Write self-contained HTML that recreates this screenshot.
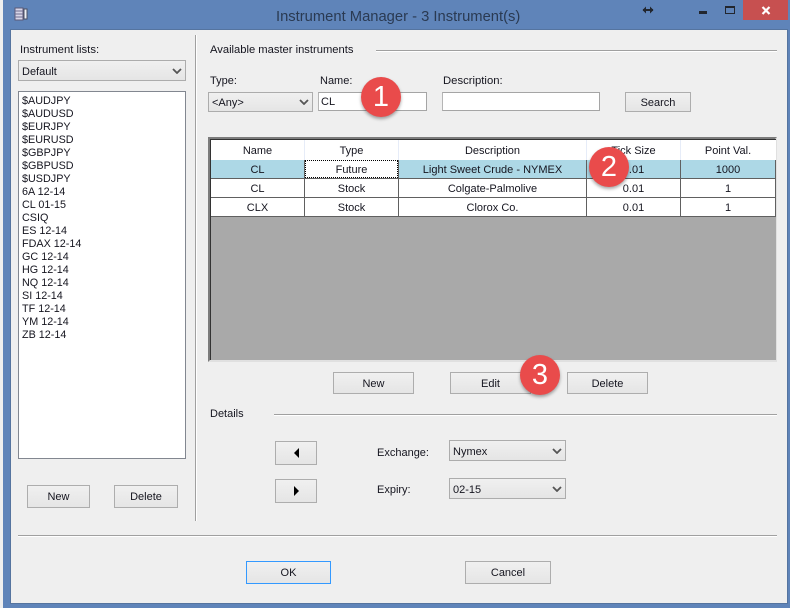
<!DOCTYPE html>
<html><head><meta charset="utf-8"><style>
html,body{margin:0;padding:0}
body{width:790px;height:608px;position:relative;overflow:hidden;background:#5f84b9;font-family:"Liberation Sans",sans-serif;font-size:11px;color:#15151f}
div{position:absolute;box-sizing:border-box}
.t{white-space:nowrap;line-height:14px;height:14px;margin-top:1px}
.btn{border:1px solid #adadad;background:linear-gradient(#f0f0f0,#e5e5e5);text-align:center;padding-top:1px}
.sel{border:1px solid #acacac;background:linear-gradient(#f0f0f0,#e5e5e5);padding-left:3px;padding-top:1px;white-space:nowrap}
.sel svg{position:absolute;right:3px;top:50%;margin-top:-3px}
.inp{border:1px solid #a5a5a5;border-left-color:#b5b5b5;background:#fff;padding-left:2px;padding-top:1px}
.hl{height:2px;background:linear-gradient(#a0a0a0 50%,#fff 50%)}
.vl{width:2px;background:linear-gradient(90deg,#a0a0a0 50%,#fff 50%)}
.c{text-align:center;line-height:18px;height:18px;white-space:nowrap;margin-top:1px}
.g{background:#606060}
.badge{width:40px;height:40px;border-radius:50%;background:#e94b4b;box-shadow:0 2px 3px rgba(0,0,0,.35);color:#fff;font-size:29px;line-height:40px;text-align:center}
</style></head><body>
<div style="left:0;top:0;width:3px;height:608px;background:#efefef"></div>
<div style="left:3px;top:0;width:787px;height:608px;background:#5f84b9"></div>
<div style="left:11px;top:30px;width:776px;height:573px;background:#efefef;box-shadow:0 0 0 1px #55749f"></div>

<svg style="position:absolute;left:14px;top:7px" width="14" height="14" viewBox="0 0 14 14"><rect x="1" y="1" width="8" height="12" fill="#d9d6e8" stroke="#5b5a78"/><path d="M1 4h8M1 7h8M1 10h8" stroke="#6f6d90"/><rect x="10" y="2" width="3" height="10" fill="#eef0f5" stroke="#4b4f63"/></svg>
<div class="t" style="left:276px;top:7px;font-size:14.75px;line-height:18px;height:18px;color:#2a3a52">Instrument Manager - 3 Instrument(s)</div>

<svg style="position:absolute;left:642px;top:5px" width="12" height="10" viewBox="0 0 12 10"><path d="M1 5h10" stroke="#22262e" stroke-width="2"/><path d="M0.500 5L4 1.500V8.500ZM11.500 5L8 1.500V8.500Z" fill="#22262e"/></svg>
<div style="left:699px;top:11px;width:8px;height:3px;background:#22262e"></div>
<div style="left:725px;top:6px;width:10px;height:8px;border:1px solid #22262e;border-top-width:2px"></div>
<div style="left:743px;top:0;width:45px;height:20px;background:#c75050"></div>
<svg style="position:absolute;left:761px;top:6px" width="10" height="9" viewBox="0 0 10 9"><path d="M1.500 1L8.500 8M8.500 1L1.500 8" stroke="#fff" stroke-width="2.200"/></svg>

<div class="t" style="left:20px;top:42px;font-size:11.3px">Instrument lists:</div>
<div class="sel" style="left:18px;top:60px;width:168px;height:21px;line-height:21px">Default<svg width="10" height="6" viewBox="0 0 10 6"><path d="M1 1l4 4 4-4" fill="none" stroke="#555" stroke-width="1.800"/></svg></div>
<div style="left:18px;top:91px;width:168px;height:368px;background:#fff;border:1px solid #828790"></div>
<div style="left:22px;top:95px;font-size:10.8px;line-height:13px;white-space:nowrap;color:#15151f">$AUDJPY<br>$AUDUSD<br>$EURJPY<br>$EURUSD<br>$GBPJPY<br>$GBPUSD<br>$USDJPY<br>6A 12-14<br>CL 01-15<br>CSIQ<br>ES 12-14<br>FDAX 12-14<br>GC 12-14<br>HG 12-14<br>NQ 12-14<br>SI 12-14<br>TF 12-14<br>YM 12-14<br>ZB 12-14</div>
<div class="btn" style="left:27px;top:485px;width:63px;height:23px;line-height:21px">New</div>
<div class="btn" style="left:114px;top:485px;width:64px;height:23px;line-height:21px">Delete</div>
<div class="vl" style="left:195px;top:35px;height:486px"></div>

<div class="t" style="left:210px;top:42px;font-size:11.2px">Available master instruments</div>
<div class="hl" style="left:376px;top:50px;width:401px"></div>
<div class="t" style="left:210px;top:73px">Type:</div>
<div class="t" style="left:320px;top:73px">Name:</div>
<div class="t" style="left:443px;top:73px;font-size:11.3px">Description:</div>
<div class="sel" style="left:208px;top:92px;width:105px;height:20px;line-height:18px;padding-left:3px">&lt;Any&gt;<svg width="10" height="6" viewBox="0 0 10 6"><path d="M1 1l4 4 4-4" fill="none" stroke="#555" stroke-width="1.800"/></svg></div>
<div class="inp" style="left:318px;top:92px;width:109px;height:19px;line-height:17px">CL</div>
<div class="inp" style="left:442px;top:92px;width:158px;height:19px"></div>
<div class="btn" style="left:625px;top:92px;width:66px;height:20px;line-height:18px">Search</div>

<div style="left:208px;top:137px;width:569px;height:225px;background:#a9a9a9;border:2px solid #7c7c7c;border-right-color:#e0e0e0;border-bottom-color:#e0e0e0"></div>
<div style="left:210px;top:139px;width:566px;height:221px;background:#a9a9a9;border-top:1px solid #333;border-left:1px solid #333"></div>
<div style="left:211px;top:140px;width:565px;height:20px;background:#fff"></div>
<div style="left:304px;top:140px;width:1px;height:20px;background:#e6ecf8"></div>
<div style="left:398px;top:140px;width:1px;height:20px;background:#e6ecf8"></div>
<div style="left:586px;top:140px;width:1px;height:20px;background:#e6ecf8"></div>
<div style="left:680px;top:140px;width:1px;height:20px;background:#e6ecf8"></div>
<div class="c" style="left:211px;top:141px;width:93px">Name</div>
<div class="c" style="left:305px;top:141px;width:93px">Type</div>
<div class="c" style="left:399px;top:141px;width:187px">Description</div>
<div class="c" style="left:587px;top:141px;width:93px">Tick Size</div>
<div class="c" style="left:681px;top:141px;width:94px">Point Val.</div>

<div style="left:211px;top:160px;width:564px;height:18px;background:#add8e6"></div>
<div style="left:211px;top:179px;width:564px;height:37px;background:#fff"></div>
<div class="g" style="left:211px;top:178px;width:565px;height:1px"></div>
<div class="g" style="left:211px;top:197px;width:565px;height:1px"></div>
<div class="g" style="left:211px;top:216px;width:565px;height:1px"></div>
<div class="g" style="left:304px;top:160px;width:1px;height:57px"></div>
<div class="g" style="left:398px;top:160px;width:1px;height:57px"></div>
<div class="g" style="left:586px;top:160px;width:1px;height:57px"></div>
<div class="g" style="left:680px;top:160px;width:1px;height:57px"></div>
<div class="g" style="left:775px;top:160px;width:1px;height:57px"></div>
<div style="left:305px;top:160px;width:93px;height:18px;background:#fff;border:1px dotted #000"></div>

<div class="c" style="left:211px;top:160px;width:93px">CL</div>
<div class="c" style="left:305px;top:160px;width:93px">Future</div>
<div class="c" style="left:399px;top:160px;width:187px">Light Sweet Crude - NYMEX</div>
<div class="c" style="left:587px;top:160px;width:93px">0.01</div>
<div class="c" style="left:681px;top:160px;width:94px">1000</div>
<div class="c" style="left:211px;top:179px;width:93px">CL</div>
<div class="c" style="left:305px;top:179px;width:93px">Stock</div>
<div class="c" style="left:399px;top:179px;width:187px">Colgate-Palmolive</div>
<div class="c" style="left:587px;top:179px;width:93px">0.01</div>
<div class="c" style="left:681px;top:179px;width:94px">1</div>
<div class="c" style="left:211px;top:198px;width:93px">CLX</div>
<div class="c" style="left:305px;top:198px;width:93px">Stock</div>
<div class="c" style="left:399px;top:198px;width:187px">Clorox Co.</div>
<div class="c" style="left:587px;top:198px;width:93px">0.01</div>
<div class="c" style="left:681px;top:198px;width:94px">1</div>

<div class="btn" style="left:333px;top:372px;width:81px;height:22px;line-height:20px">New</div>
<div class="btn" style="left:450px;top:372px;width:81px;height:22px;line-height:20px">Edit</div>
<div class="btn" style="left:567px;top:372px;width:81px;height:22px;line-height:20px">Delete</div>

<div class="t" style="left:210px;top:406px">Details</div>
<div class="hl" style="left:274px;top:414px;width:503px"></div>
<div class="btn" style="left:275px;top:441px;width:42px;height:24px"></div>
<svg style="position:absolute;left:293px;top:448px" width="6" height="10" viewBox="0 0 6 10"><path d="M6 0V10L1 5Z" fill="#000"/></svg>
<div class="btn" style="left:275px;top:479px;width:42px;height:24px"></div>
<svg style="position:absolute;left:294px;top:486px" width="6" height="10" viewBox="0 0 6 10"><path d="M0 0V10L5 5Z" fill="#000"/></svg>
<div class="t" style="left:377px;top:445px">Exchange:</div>
<div class="t" style="left:377px;top:482px">Expiry:</div>
<div class="sel" style="left:449px;top:440px;width:117px;height:21px;line-height:21px">Nymex<svg width="10" height="6" viewBox="0 0 10 6"><path d="M1 1l4 4 4-4" fill="none" stroke="#555" stroke-width="1.800"/></svg></div>
<div class="sel" style="left:449px;top:478px;width:117px;height:21px;line-height:21px">02-15<svg width="10" height="6" viewBox="0 0 10 6"><path d="M1 1l4 4 4-4" fill="none" stroke="#555" stroke-width="1.800"/></svg></div>

<div class="hl" style="left:18px;top:535px;width:759px"></div>
<div class="btn" style="left:246px;top:561px;width:85px;height:23px;line-height:21px;border-color:#3399ff">OK</div>
<div class="btn" style="left:465px;top:561px;width:86px;height:23px;line-height:21px">Cancel</div>

<div class="badge" style="left:361px;top:77px">1</div>
<div class="badge" style="left:589px;top:147px">2</div>
<div class="badge" style="left:520px;top:355px">3</div>
</body></html>
